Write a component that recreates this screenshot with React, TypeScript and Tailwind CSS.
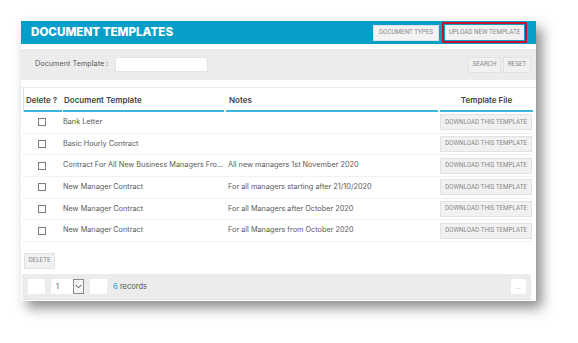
import React from "react";

type Row = { name: string; notes: string };

const rows: Row[] = [
  { name: "Bank Letter", notes: "" },
  { name: "Basic Hourly Contract", notes: "" },
  { name: "Contract For All New Business Managers Fro...", notes: "All new managers 1st November 2020" },
  { name: "New Manager Contract", notes: "For all managers starting after 21/10/2020" },
  { name: "New Manager Contract", notes: "For all Managers after October 2020" },
  { name: "New Manager Contract", notes: "For all Managers from October 2020" },
];

function GrayButton({ children, className = "" }: { children: React.ReactNode; className?: string }) {
  return (
    <div
      className={`flex items-center justify-center whitespace-nowrap bg-[#f1f1f1] border border-[#e2e2e2] text-[6.3px] text-[#8a8a8a] ${className}`}
      style={{ fontFamily: "Roboto, 'Liberation Sans', sans-serif" }}
    >
      {children}
    </div>
  );
}

export default function App() {
  return (
    <div
      className="w-[578px] h-[343px] bg-white pl-[21px] pt-[21px]"
      style={{ fontFamily: "Inter, 'Liberation Sans', sans-serif" }}
    >
      <div className="w-[515px] h-[280px] bg-white shadow-[6px_7px_12px_rgba(0,0,0,0.45)] flex flex-col">
        {/* title bar */}
        <div className="h-[23px] bg-[#079fc7] flex items-center pl-[10px] pr-[9px]">
          <h1 className="text-[11.6px] font-extrabold text-white flex-1 whitespace-nowrap">DOCUMENT TEMPLATES</h1>
          <GrayButton className="w-[66px] h-[16px] bg-[#f3f3f3] border-[#dcdcdc]">DOCUMENT TYPES</GrayButton>
          <div className="ml-[3px] border-2 border-[#c8102e] p-px">
            <GrayButton className="w-[79px] h-[15px] border-0">UPLOAD NEW TEMPLATE</GrayButton>
          </div>
        </div>

        {/* filter bar */}
        <div className="mt-[5px] h-[31px] bg-[#ececec] flex items-center pl-[14px] pr-[5px]">
          <span className="text-[7.3px] text-[#5a5a5a]">Document Template :</span>
          <div className="ml-[7px] w-[93px] h-[15px] bg-white border border-[#e4e4e4]" />
          <div className="flex-1" />
          <GrayButton className="w-[33px] h-[16px]">SEARCH</GrayButton>
          <GrayButton className="ml-[2px] w-[28px] h-[16px]">RESET</GrayButton>
        </div>

        {/* table */}
        <div className="mt-[7px] border-t border-[#ececec] pl-[2px] pr-[3px]">
          <div className="flex h-[24px] pt-px text-[8px] font-semibold text-[#444] border-l border-[#cdeaf3]">
            <div className="w-[38px] flex items-center pl-[2px] border-b-2 border-[#3cb6da]">Delete ?</div>
            <div className="ml-px w-[161px] flex items-center pl-px border-b-2 border-[#3cb6da]">Document Template</div>
            <div className="ml-[2px] w-[212px] flex items-center pl-[3px] border-b-2 border-[#3cb6da]">Notes</div>
            <div className="ml-[2px] flex-1 flex items-center justify-center border-b-2 border-[#3cb6da]">Template File</div>
          </div>
          {rows.map((r, i) => (
            <div key={i} className="flex items-center h-[21.7px] border-b border-[#f1f1f1] text-[7.3px] text-[#5a5a5a]">
              <div className="w-[38px] flex justify-center">
                <div className="w-[8px] h-[8px] border border-[#7d7d7d] bg-white" />
              </div>
              <div className="ml-px w-[161px] pl-px whitespace-nowrap overflow-hidden">{r.name}</div>
              <div className="ml-[2px] w-[212px] pl-[3px] truncate">{r.notes}</div>
              <div className="ml-[3px] flex-1 pr-px">
                <GrayButton className="h-[16px]">DOWNLOAD THIS TEMPLATE</GrayButton>
              </div>
            </div>
          ))}
        </div>

        <div className="pl-[3px] mt-[11px]">
          <GrayButton className="w-[31px] h-[16px]">DELETE</GrayButton>
        </div>

        {/* pager */}
        <div className="mt-[5px] ml-[1px] mr-[5px] h-[26px] bg-[#ececec] flex items-center pl-[6px] pr-[5px] border-b border-[#e2e2e2]">
          <div className="w-[17px] h-[15px] bg-white" />
          <div className="ml-[6px] flex h-[15px] w-[33px] bg-white">
            <span className="flex-1 pl-[5px] text-[7px] text-[#555] leading-[15px]">1</span>
            <span className="w-[11px] h-[15px] border border-[#8a8a8a] bg-[#f4f4f4] flex items-center justify-center">
              <svg width="7" height="5" viewBox="0 0 7 5">
                <path d="M0.8 1 L3.5 3.8 L6.2 1" fill="none" stroke="#444" strokeWidth="1" />
              </svg>
            </span>
          </div>
          <div className="ml-[6px] w-[17px] h-[15px] bg-white" />
          <span className="ml-[6px] text-[7.5px] text-[#555]">
            <span className="text-[#3cb2d8] font-semibold">6</span> records
          </span>
          <div className="flex-1" />
          <div className="w-[15px] h-[15px] bg-white rounded-[2px] flex items-center justify-center text-[6px] text-[#999]">...</div>
        </div>
      </div>
    </div>
  );
}
